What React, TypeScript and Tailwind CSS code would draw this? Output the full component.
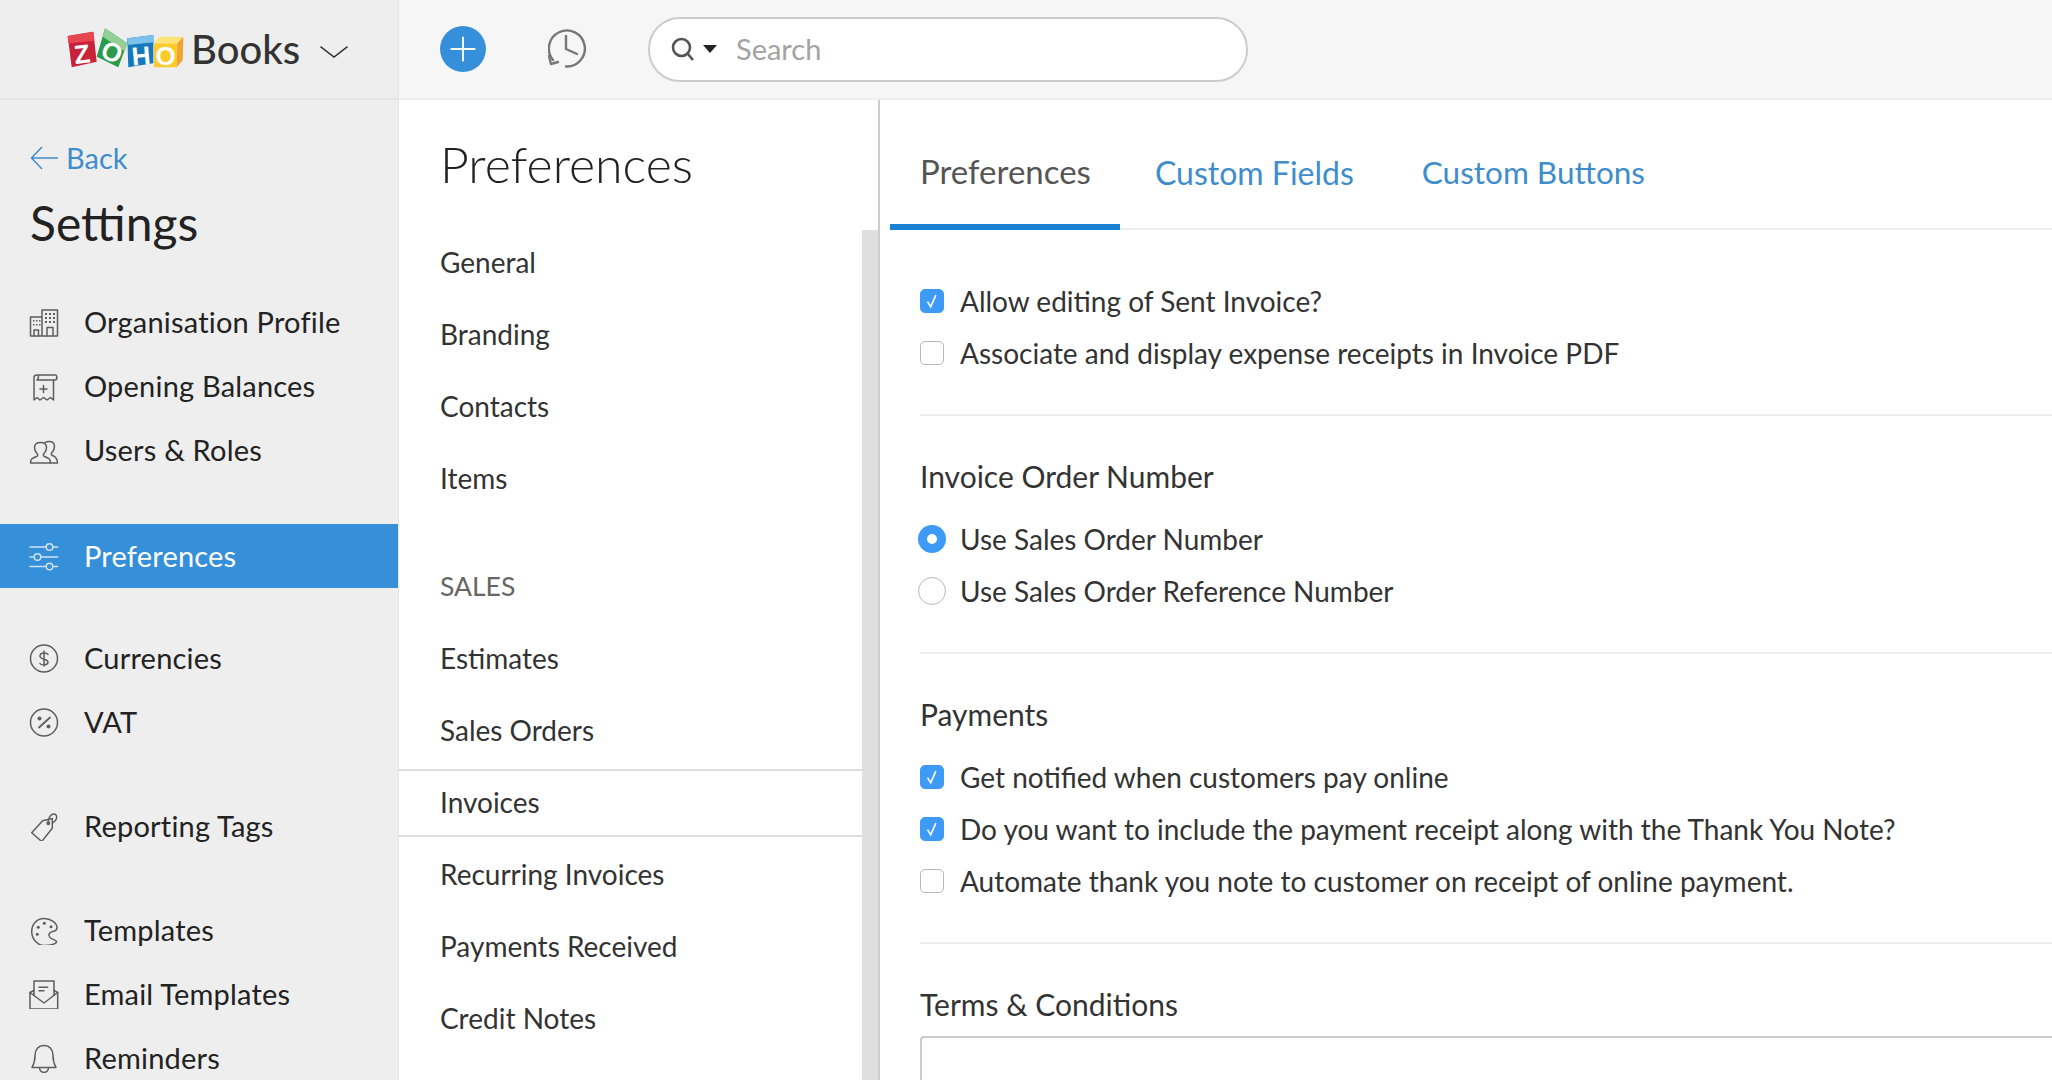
import type { ReactNode } from 'react';
import { Plus } from 'lucide-react';

const ic = { fill: 'none', stroke: 'currentColor', strokeWidth: 1.5, strokeLinecap: 'round', strokeLinejoin: 'round' } as const;

function IconBox({ children }: { children: ReactNode }) {
  return (
    <svg viewBox="0 0 30 30" className="h-[30px] w-[30px] shrink-0" {...ic}>
      {children}
    </svg>
  );
}

const icons: Record<string, ReactNode> = {
  building: (
    <>
      <path d="M13 10H1.500v19H13M13 29V3h15.500v26H13z" />
      <path d="M18 29v-8.500h6V29M5 29v-6h4.500v6" />
      <path
        stroke="none"
        fill="currentColor"
        d="M4 13h1.500v1.500H4zM7 13h1.500v1.500H7zM10 13h1.500v1.500H10zM4 17h1.500v1.500H4zM7 17h1.500v1.500H7zM10 17h1.500v1.500H10zM16 6h2v2h-2zM20 6h2v2h-2zM24 6h2v2h-2zM16 10h2v2h-2zM20 10h2v2h-2zM24 10h2v2h-2zM16 14h2v2h-2zM20 14h2v2h-2zM24 14h2v2h-2z"
      />
    </>
  ),
  receipt: (
    <>
      <path d="M8 4h18c2.500 0 2.500 5 0 5h-1.500v20l-3-2.500-3.500 2.500-3.500-2.500-3.500 2.500-3-2.500-3 2.500V6.500C5 4.500 7 4 8 4zM8 4c2 0 2 3 0 5h16" />
      <path d="M14.500 14.500v7M11 18h7" />
    </>
  ),
  users: (
    <>
      <path d="M1.500 28c0-4 2-5 6-6.500 1.500-.5 1.500-2 .5-3-1.500-1.500-2.500-3-2.500-6 0-3 2-5 6-5s6 2 6 5c0 3-1 4.500-2.500 6-1 1-1 2.500.5 3 4 1.500 6 2.500 6 6.500z" />
      <path d="M16 7.500c1-.7 2.500-1 4-1 4 0 5.500 2 5.500 5 0 3-1 4.500-2.500 6-1 1-1 2.500.5 3 2.500 1 5 2.500 5 7.500h-7" />
    </>
  ),
  sliders: (
    <>
      <path d="M1 6h16M24 6h4.700M1 16h4M12 16h16.700M1 25.500h16M24 25.500h4.700" />
      <circle cx="20.500" cy="6" r="3.300" />
      <circle cx="8.500" cy="16" r="3.300" />
      <circle cx="20.500" cy="25.500" r="3.300" />
    </>
  ),
  dollar: (
    <>
      <circle cx="15" cy="15.500" r="13.500" />
      <path d="M19 11.500c-1-2-8-2.500-8 1.500s8 2.500 8 6-7 3.500-8 1.500M15 8v15" />
    </>
  ),
  percent: (
    <>
      <circle cx="15" cy="15.500" r="13.500" />
      <path d="M21 10.500l-11 10" strokeWidth="1.800" />
      <circle cx="10.500" cy="11.500" r="2" fill="currentColor" stroke="none" />
      <circle cx="19.500" cy="19.500" r="2" fill="currentColor" stroke="none" />
    </>
  ),
  tag: (
    <>
      <path d="M2.700 21.700l11-12 9.600-2.200v9.800L12.700 30.500z" />
      <circle cx="19.300" cy="12.300" r="1.200" fill="currentColor" />
      <path d="M19.300 12.500c-.5-5 2-9 5-9.500 3-.5 4 2.500 3 5-.5 1.500-1.500 2.500-3 3.500" />
    </>
  ),
  palette: (
    <>
      <path d="M15 3.500C8 3.500 2.700 9 2.700 16.500S8.500 30.500 15 30.500c6 0 13-1.500 12.500-4-.5-2-7-2-7.500-6-.5-3 3-4 5.500-4.500 2-.5 2.500-2 2.500-3.500 0-4.500-6-9-13-9z" />
      <circle cx="9.300" cy="12.300" r="1.500" fill="currentColor" stroke="none" />
      <circle cx="15.300" cy="8.300" r="1.500" fill="currentColor" stroke="none" />
      <circle cx="22" cy="11.700" r="1.500" fill="currentColor" stroke="none" />
      <circle cx="8.300" cy="19.300" r="1.500" fill="currentColor" stroke="none" />
    </>
  ),
  mail: (
    <>
      <path d="M5 16.500V2h20v14.500" />
      <path d="M5 11.500l-4 2V30h27.700V13.500l-3.700-2" />
      <path d="M1 13.500L15 24l13.700-10.500" />
      <path d="M10 8.300h8.700M10 11.700h5" />
    </>
  ),
  bell: (
    <path d="M15 2.500c-5.500 0-9 4-9 10 0 5-1 8.500-3 12h24c-2-3.500-3-7-3-12 0-6-3.500-10-9-10zM10.500 24.500c0 6.500 9 6.500 9 0" />
  ),
};

function SideItem({ icon, label, active }: { icon: string; label: string; active?: boolean }) {
  return (
    <div className={`flex h-[64px] items-center gap-[25px] pl-[29px] text-[29px] tracking-[0.2px] ${active ? 'bg-[#358fd9] text-white' : 'text-[#222]'}`}>
      <span className={active ? 'text-[#cfe3f5]' : 'text-[#5e5e5e]'}>
        <IconBox>{icons[icon]}</IconBox>
      </span>
      {label}
    </div>
  );
}

function NavItem({ label, current }: { label: string; current?: boolean }) {
  return (
    <div className={`flex items-center pl-[41px] text-[28px] text-[#333] ${current ? 'mb-[1px] mt-[3px] h-[68px] border-y-2 border-[#ddd] pb-[2px]' : 'h-[72px]'}`}>
      {label}
    </div>
  );
}

function Check({ on }: { on?: boolean }) {
  return (
    <span className={`mt-[1px] flex h-[24px] w-[24px] shrink-0 items-center justify-center rounded-[5px] border ${on ? 'border-[#3d9af6] bg-[#3d9af6]' : 'border-[#b8b8b8] bg-white'}`}>
      {on && (
        <svg viewBox="0 0 14 14" className="h-[18px] w-[18px]" fill="none" stroke="#fff" strokeWidth="1.300">
          <path d="M3.500 7.500l2.500 4L10 2.500" />
        </svg>
      )}
    </span>
  );
}

function Radio({ on }: { on?: boolean }) {
  return on ? (
    <span className="-ml-[2px] mt-[1px] flex h-[28px] w-[28px] shrink-0 items-center justify-center rounded-full bg-[#3d9af6]">
      <span className="h-[10px] w-[10px] rounded-full bg-white" />
    </span>
  ) : (
    <span className="-ml-[2px] mt-[1px] h-[28px] w-[28px] shrink-0 rounded-full border border-[#b8b8b8] bg-white" />
  );
}

function Option({ children, box, radio }: { children: ReactNode; box: ReactNode; radio?: boolean }) {
  return (
    <div className={`flex h-[52px] items-center pb-[1px] text-[28px] text-[#333] ${radio ? 'gap-[14px]' : 'gap-[16px]'}`}>
      {box}
      {children}
    </div>
  );
}

function Section({ title, children }: { title: string; children: ReactNode }) {
  return (
    <section className="mt-[40px] border-b-2 border-[#eeeeee] pb-[35px]">
      <h3 className="mb-[17px] flex h-[40px] items-center text-[30px] text-[#333]">{title}</h3>
      {children}
    </section>
  );
}

export default function App() {
  return (
    <div className="flex h-[1080px] flex-col overflow-hidden bg-white font-['Lato','Liberation_Sans',sans-serif]">
      {/* Top bar */}
      <header className="flex h-[100px] shrink-0">
        <div className="flex w-[399px] items-center border-b-2 border-r border-[#e6e6e6] bg-[#eeeeee] pl-[67px]">
          <svg viewBox="0 0 117 44" className="h-[44px] w-[117px] shrink-0">
            <g fontFamily="'Liberation Sans',sans-serif" fontWeight="700" fontSize="26" fill="#fff" textAnchor="middle">
              <path d="M0.700 9l25.600-4.300 3.400 30L4.700 40.300z" fill="#c9233a" />
              <path d="M0.700 9l25.600-4.300 1 9-26 2.600z" fill="#e8474f" />
              <text x="15" y="36" transform="rotate(-7 15 27)">Z</text>
              <path d="M38 1.300l22.300 15-9 24-21.600-10.600z" fill="#2a9a4b" />
              <path d="M38 1.300l22.300 15-2.300 8.400-22.300-15z" fill="#93cf97" />
              <text x="45" y="34" transform="rotate(25 45 25)">O</text>
              <path d="M60.300 11.300l26-3.300v28.300l-25 4z" fill="#1479bd" />
              <path d="M60.300 11.300l26-3.300 1 7.300-26 2.700z" fill="#7cc1ea" />
              <text x="74" y="38" transform="rotate(-5 74 29)">H</text>
              <path d="M87 16.300h23.300l-.6 24H87z" fill="#fdcb2c" />
              <path d="M92.300 9.700h24l-6 6.600H87z" fill="#fde478" />
              <path d="M116.300 9.700l-.6 23.300-6 7.300.6-24z" fill="#efa431" />
              <text x="98.500" y="38">O</text>
            </g>
          </svg>
          <span className="ml-[7px] text-[40px] font-medium leading-none text-[#333]">Books</span>
          <svg viewBox="0 0 28 12" className="ml-[20px] mt-[6px] h-[12px] w-[28px]" fill="none" stroke="#333" strokeWidth="1.500">
            <path d="M0.500 0.700L14 11 27.500 0.700" />
          </svg>
        </div>
        <div className="flex flex-1 items-center border-b-2 border-[#eeeeee] bg-[#f6f6f6] pl-[41px]">
          <span className="flex h-[46px] w-[46px] items-center justify-center rounded-full bg-[#368fdb] text-white">
            <Plus className="h-[40px] w-[40px]" strokeWidth={1.100} />
          </span>
          <svg viewBox="0 0 40 40" className="ml-[62px] h-[40px] w-[40px]" fill="none" stroke="#777" strokeWidth="2.400" strokeLinecap="round" strokeLinejoin="round">
            <path d="M5 31A18 18 0 1 1 18 37.500" />
            <path d="M18 7v13l11 5M1 27l2 8 7-2" />
          </svg>
          <div className="ml-[60px] flex h-[65px] w-[600px] items-center rounded-[32px] border-2 border-[#cccccc] bg-white pl-[21px]">
            <svg viewBox="0 0 24 24" className="h-[24px] w-[24px]" fill="none" stroke="#555" strokeWidth="2.600">
              <circle cx="10.500" cy="10.500" r="8.500" />
              <path d="M16.500 16.500L22 23" />
            </svg>
            <span className="ml-[8px] h-0 w-0 border-x-[7px] border-t-[8px] border-x-transparent border-t-[#222]" />
            <span className="ml-[19px] text-[29px] text-[#a3a3a3]">Search</span>
          </div>
        </div>
      </header>

      <div className="flex min-h-0 flex-1">
        {/* Settings sidebar */}
        <aside className="w-[399px] shrink-0 border-r border-[#e6e6e6] bg-[#eeeeee]">
          <div className="mt-[36px] flex h-[44px] items-center pl-[30px] text-[29px] text-[#408dcb]">
            <svg viewBox="0 0 28 24" className="h-[24px] w-[28px]" fill="none" stroke="currentColor" strokeWidth="1.500">
              <path d="M12 1L1.500 12 12 23M2 12h26" />
            </svg>
            <span className="ml-[8px]">Back</span>
          </div>
          <h1 className="mb-[37px] mt-[13px] flex h-[60px] items-center pl-[30px] text-[48px] text-[#222]">Settings</h1>
          <SideItem icon="building" label="Organisation Profile" />
          <SideItem icon="receipt" label="Opening Balances" />
          <SideItem icon="users" label="Users & Roles" />
          <div className="h-[42px]" />
          <SideItem icon="sliders" label="Preferences" active />
          <div className="h-[38px]" />
          <SideItem icon="dollar" label="Currencies" />
          <SideItem icon="percent" label="VAT" />
          <div className="h-[40px]" />
          <SideItem icon="tag" label="Reporting Tags" />
          <div className="h-[40px]" />
          <SideItem icon="palette" label="Templates" />
          <SideItem icon="mail" label="Email Templates" />
          <SideItem icon="bell" label="Reminders" />
        </aside>

        {/* Preferences nav */}
        <nav className="flex w-[481px] shrink-0 border-r-2 border-[#cccccc]">
          <div className="min-w-0 flex-1">
            <h2 className="flex h-[126px] items-center pl-[41px] pt-[2px] text-[50px] font-light text-[#222]">Preferences</h2>
            <NavItem label="General" />
            <NavItem label="Branding" />
            <NavItem label="Contacts" />
            <NavItem label="Items" />
            <div className="mt-[37px] flex h-[71px] items-center pl-[41px] text-[26.5px] text-[#666]">SALES</div>
            <NavItem label="Estimates" />
            <NavItem label="Sales Orders" />
            <NavItem label="Invoices" current />
            <NavItem label="Recurring Invoices" />
            <NavItem label="Payments Received" />
            <NavItem label="Credit Notes" />
          </div>
          <div className="mt-[130px] w-[16px] shrink-0 bg-[#dfdfdf]" />
        </nav>

        {/* Main panel */}
        <main className="min-w-0 flex-1">
          <div className="ml-[10px] flex h-[130px] items-end border-b-2 border-[#eeeeee]">
            <div className="-mb-[2px] h-[130px] w-[230px] border-b-[6px] border-[#1a82d4] pl-[30px] pt-[47px] text-[33px] text-[#555]">Preferences</div>
            <div className="ml-[35px] h-[130px] pt-[51px] text-[32px] text-[#408dcb]">Custom Fields</div>
            <div className="ml-[68px] h-[130px] pt-[51px] text-[31.5px] text-[#408dcb]">Custom Buttons</div>
          </div>
          <div className="ml-[40px]">
            <section className="border-b-2 border-[#eeeeee] pb-[35px] pt-[45px]">
              <Option box={<Check on />}>Allow editing of Sent Invoice?</Option>
              <Option box={<Check />}>Associate and display expense receipts in Invoice PDF</Option>
            </section>
            <Section title="Invoice Order Number">
              <Option radio box={<Radio on />}>Use Sales Order Number</Option>
              <Option radio box={<Radio />}>Use Sales Order Reference Number</Option>
            </Section>
            <Section title="Payments">
              <Option box={<Check on />}>Get notified when customers pay online</Option>
              <Option box={<Check on />}>Do you want to include the payment receipt along with the Thank You Note?</Option>
              <Option box={<Check />}>Automate thank you note to customer on receipt of online payment.</Option>
            </Section>
            <h3 className="mb-[12px] mt-[40px] flex h-[40px] items-center text-[30px] text-[#333]">Terms &amp; Conditions</h3>
            <div className="h-[120px] rounded-tl-[4px] border-2 border-r-0 border-[#cccccc]" />
          </div>
        </main>
      </div>
    </div>
  );
}
